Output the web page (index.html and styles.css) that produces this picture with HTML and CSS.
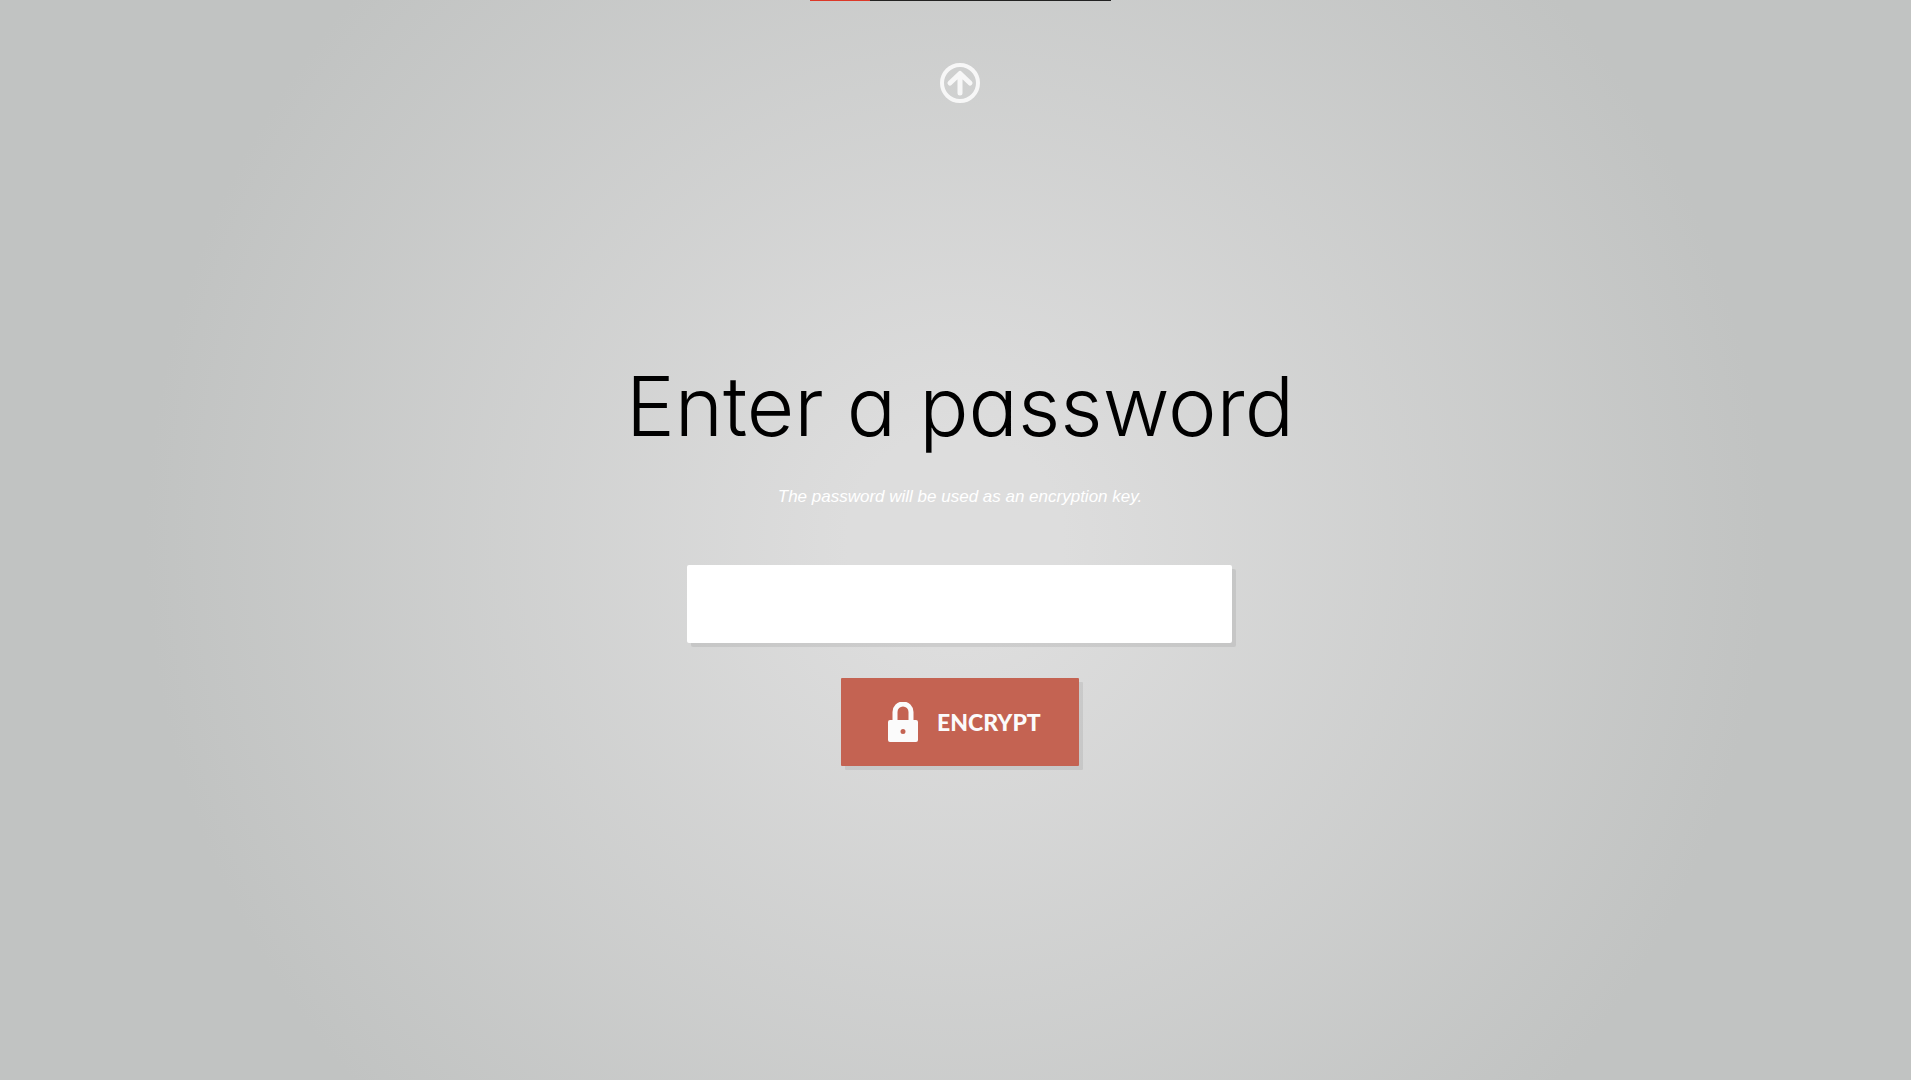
FILE: index.html
```html
<!DOCTYPE html>
<html lang="en">
<head>
<meta charset="utf-8">
<title>Enter a password</title>
<link rel="stylesheet" href="styles.css">
</head>
<body>
<div class="progress"><div class="progress-done"></div></div>
<a class="back" href="#" aria-label="Back">
<svg viewBox="0 0 40 40" width="40" height="40" fill="none" stroke="currentColor"><circle cx="20" cy="20" r="18" stroke-width="4"/><path d="M20 30V12M10 20L20 10.500L30 20" stroke-width="5" stroke-linecap="round" stroke-linejoin="round"/></svg>
</a>
<form class="step">
<h1 class="title"><label for="password">Enter a password</label></h1>
<p class="hint">The password will be used as an encryption key.</p>
<input class="password" id="password" type="password">
<button class="encrypt" type="button">
<svg viewBox="0 0 32 40" width="32" height="40"><path fill="none" stroke="currentColor" stroke-width="5" d="M8 20V10a8 8 0 0 1 16 0v10"/><path fill="currentColor" fill-rule="evenodd" d="M3 18h26q2 0 2 2v18q0 2-2 2H3q-2 0-2-2V20q0-2 2-2zM16 27a2.500 2.500 0 1 0 0 5a2.500 2.500 0 1 0 0-5z"/></svg>
<span>ENCRYPT</span>
</button>
</form>
</body>
</html>
```
FILE: styles.css
```css
* { box-sizing: border-box; }
body {
  margin: 0;
  min-height: 100vh;
  padding-left: 9px;
  display: flex;
  flex-direction: column;
  align-items: center;
  font-family: "Liberation Sans", Arial, sans-serif;
  background: radial-gradient(circle closest-side at center, #dddddd 20%, #c1c3c2 150%);
}
.progress { width: 301px; height: 1px; background: #222; }
.progress-done { width: 20%; height: 1px; background: #dc3828; }
.back { height: 40px; margin-top: 62px; color: #f7f7f7; }
.step { display: flex; flex-direction: column; align-items: center; margin-top: 248px; }
.title {
  margin: 0;
  font: 300 82px/112px Inter, sans-serif;
  font-feature-settings: "cv11";
}
.hint { margin: 24px 0 58px; color: #fff; font-size: 17px; line-height: 20px; font-style: italic; }
.password { width: 545px; height: 78px; border: 0; border-radius: 2px; padding: 0 24px; font-size: 32px; box-shadow: 4px 4px 0 rgba(0, 0, 0, 0.07); }
.encrypt {
  display: flex;
  align-items: center;
  gap: 18px;
  width: 238px;
  height: 88px;
  margin-top: 35px;
  padding: 0 0 0 46px;
  border: 0;
  border-radius: 1px;
  color: #fbfbfb;
  background: #c46352;
  font: 900 23px/32px Lato, sans-serif;
  box-shadow: 4px 4px 0 rgba(0, 0, 0, 0.07);
}
```
